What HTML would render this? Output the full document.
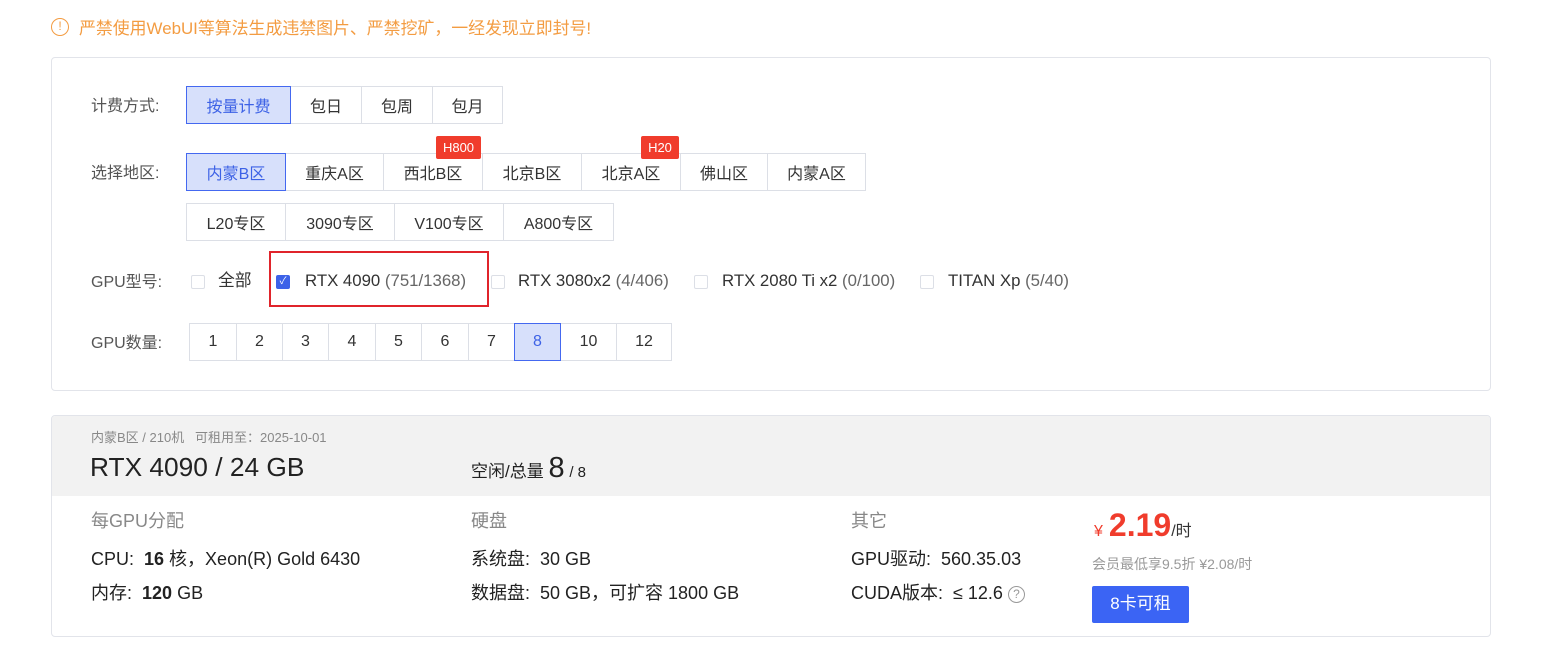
<!DOCTYPE html>
<html><head><meta charset="utf-8"><style>
*{margin:0;padding:0;box-sizing:border-box}
body{width:1561px;height:654px;background:#fff;font-family:"Liberation Sans","Noto Sans CJK SC",sans-serif;color:#333;position:relative;overflow:hidden}
.a{position:absolute;white-space:nowrap;line-height:1.2}
.b{position:absolute;border:1px solid #dcdfe6;font-size:16px;color:#333;display:flex;align-items:center;justify-content:center;background:#fff}
.s{background:#d7e0fb;border-color:#4468f0;color:#3d62e6;z-index:2}
.lbl{font-size:16px;color:#555}
.cb{position:absolute;width:14px;height:14px;border:1px solid #dcdfe6;border-radius:2px;background:#fff}
.bd{position:absolute;background:#f03c2c;color:#fff;font-size:13px;height:23px;display:flex;align-items:center;justify-content:center;border-radius:2px;z-index:3}
.g{font-size:16.8px;top:271px}
.d{font-size:18px;color:#222}
</style></head><body>
<div class="a" style="left:51px;top:18px;width:18px;height:18px;border:1.5px solid #f39c42;border-radius:50%;color:#f39c42;font-size:12px;text-align:center;line-height:15px">!</div>
<div class="a" style="left:79px;top:19px;font-size:16.9px;color:#f39c42">严禁使用WebUI等算法生成违禁图片、严禁挖矿，一经发现立即封号!</div>

<div class="a" style="left:51px;top:57px;width:1440px;height:334px;border:1px solid #e2e4ea;border-radius:4px"></div>

<div class="a lbl" style="left:91px;top:97px">计费方式:</div>
<div class="b s" style="left:186px;top:86px;width:105px;height:38px">按量计费</div>
<div class="b" style="left:290px;top:86px;width:72px;height:38px">包日</div>
<div class="b" style="left:361px;top:86px;width:72px;height:38px">包周</div>
<div class="b" style="left:432px;top:86px;width:71px;height:38px">包月</div>

<div class="a lbl" style="left:91px;top:164px">选择地区:</div>
<div class="b s" style="left:186px;top:153px;width:100px;height:38px">内蒙B区</div>
<div class="b" style="left:285px;top:153px;width:99px;height:38px">重庆A区</div>
<div class="b" style="left:383px;top:153px;width:100px;height:38px">西北B区</div>
<div class="b" style="left:482px;top:153px;width:100px;height:38px">北京B区</div>
<div class="b" style="left:581px;top:153px;width:100px;height:38px">北京A区</div>
<div class="b" style="left:680px;top:153px;width:88px;height:38px">佛山区</div>
<div class="b" style="left:767px;top:153px;width:99px;height:38px">内蒙A区</div>
<div class="bd" style="left:436px;top:136px;width:45px">H800</div>
<div class="bd" style="left:641px;top:136px;width:38px">H20</div>
<div class="b" style="left:186px;top:203px;width:100px;height:38px">L20专区</div>
<div class="b" style="left:285px;top:203px;width:110px;height:38px">3090专区</div>
<div class="b" style="left:394px;top:203px;width:110px;height:38px">V100专区</div>
<div class="b" style="left:503px;top:203px;width:111px;height:38px">A800专区</div>

<div class="a lbl" style="left:91px;top:273px">GPU型号:</div>
<div class="cb" style="left:191px;top:275px"></div>
<div class="a g" style="left:218px">全部</div>
<div class="a" style="left:269px;top:251px;width:220px;height:56px;border:2px solid #e0242b"></div>
<div class="cb" style="left:276px;top:275px;background:#3d62e8;border-color:#3d62e8;color:#fff;font-size:10px;line-height:12px;text-align:center">✓</div>
<div class="a g" style="left:305px">RTX 4090 <span style="color:#666">(751/1368)</span></div>
<div class="cb" style="left:491px;top:275px"></div>
<div class="a g" style="left:518px">RTX 3080x2 <span style="color:#666">(4/406)</span></div>
<div class="cb" style="left:694px;top:275px"></div>
<div class="a g" style="left:722px">RTX 2080 Ti x2 <span style="color:#666">(0/100)</span></div>
<div class="cb" style="left:920px;top:275px"></div>
<div class="a g" style="left:948px">TITAN Xp <span style="color:#666">(5/40)</span></div>

<div class="a lbl" style="left:91px;top:334px">GPU数量:</div>
<div class="b" style="left:189px;top:323px;width:48px;height:38px">1</div>
<div class="b" style="left:236px;top:323px;width:47px;height:38px">2</div>
<div class="b" style="left:282px;top:323px;width:47px;height:38px">3</div>
<div class="b" style="left:328px;top:323px;width:48px;height:38px">4</div>
<div class="b" style="left:375px;top:323px;width:47px;height:38px">5</div>
<div class="b" style="left:421px;top:323px;width:48px;height:38px">6</div>
<div class="b" style="left:468px;top:323px;width:47px;height:38px">7</div>
<div class="b s" style="left:514px;top:323px;width:47px;height:38px">8</div>
<div class="b" style="left:560px;top:323px;width:57px;height:38px">10</div>
<div class="b" style="left:616px;top:323px;width:56px;height:38px">12</div>

<div class="a" style="left:51px;top:415px;width:1440px;height:222px;border:1px solid #e2e4ea;border-radius:4px;overflow:hidden"><div style="height:80px;background:#f2f2f2"></div></div>
<div class="a" style="left:91px;top:430px;font-size:13px;color:#888">内蒙B区 / 210机&nbsp;&nbsp;&nbsp;可租用至：2025-10-01</div>
<div class="a" style="left:90px;top:452px;font-size:26.3px;color:#222">RTX 4090 / 24 GB</div>
<div class="a" style="left:471px;top:451px;font-size:17px;color:#222">空闲/总量 <span style="font-size:29px">8</span> <span style="font-size:15px">/ 8</span></div>

<div class="a d" style="left:91px;top:511px;color:#888">每GPU分配</div>
<div class="a d" style="left:91px;top:549px">CPU:&nbsp; <b>16</b> 核，Xeon(R) Gold 6430</div>
<div class="a d" style="left:91px;top:583px">内存:&nbsp; <b>120</b> GB</div>
<div class="a d" style="left:471px;top:511px;color:#888">硬盘</div>
<div class="a d" style="left:471px;top:549px">系统盘:&nbsp; 30 GB</div>
<div class="a d" style="left:471px;top:583px">数据盘:&nbsp; 50 GB，可扩容 1800 GB</div>
<div class="a d" style="left:851px;top:511px;color:#888">其它</div>
<div class="a d" style="left:851px;top:549px">GPU驱动:&nbsp; 560.35.03</div>
<div class="a d" style="left:851px;top:583px">CUDA版本:&nbsp; ≤ 12.6 <span style="display:inline-block;width:17px;height:17px;border:1px solid #999;border-radius:50%;font-size:12px;color:#999;text-align:center;line-height:15px;vertical-align:1px">?</span></div>
<div class="a" style="left:1094px;top:506px;color:#f03c2c"><span style="font-size:16px">¥</span><b style="font-size:32px;margin-left:6px">2.19</b><span style="font-size:16px;color:#333">/时</span></div>
<div class="a" style="left:1092px;top:556px;font-size:14px;color:#999">会员最低享9.5折 ¥2.08/时</div>
<div class="a" style="left:1092px;top:586px;width:97px;height:37px;background:#3b64f4;border-radius:2px;color:#fff;font-size:17px;display:flex;align-items:center;justify-content:center">8卡可租</div>
</body></html>
